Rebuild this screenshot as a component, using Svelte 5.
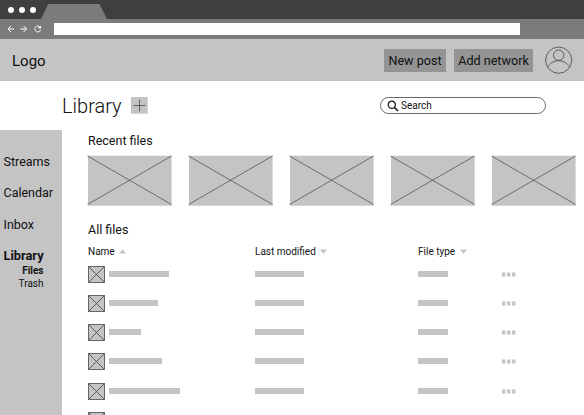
<script>
  const thumbs = [1, 2, 3, 4, 5];
  const rows = [60, 49, 32, 53, 71, 0];
</script>

<div class="window">
  <div class="tabs">
    <i></i><i></i><i></i>
    <svg class="tab" width="66" height="15"><path d="M0 15 7.2 0H58.500L66 15Z" fill="#7b7b7b" /></svg>
  </div>
  <div class="toolbar">
    <svg width="44" height="10" fill="none" stroke="#fff" stroke-width="1">
      <path d="M7 5H1.200M4 2 1 5l3 3M13.500 5h6M16.600 2l3 3-3 3" />
      <path d="M33 3.200A2.900 2.900 0 1 0 33.500 6" />
      <path d="M34 1.500V4.500H31Z" fill="#fff" stroke="none" />
    </svg>
    <div class="address"></div>
  </div>
  <header>
    <span class="logo">Logo</span>
    <button class="new">New post</button>
    <button class="network">Add network</button>
    <svg class="avatar" width="28" height="28" fill="none" stroke="#444" stroke-width=".8">
      <circle cx="13.700" cy="14.200" r="13.100" /><circle cx="13.700" cy="9.200" r="5.200" />
      <path d="M2.600 21.200C7.700 12.500 19.700 12.500 24.800 21.200" />
    </svg>
  </header>
  <div class="title">
    <h1>Library</h1>
    <svg class="plus" width="17" height="17"><rect width="16.700" height="16.700" fill="#c4c4c4" /><path d="M2.500 8.500H14.500M8.500 2.500V14.500" stroke="#555" stroke-width=".9" /></svg>
    <div class="search">
      <svg width="12" height="12" fill="none" stroke="#111"><circle cx="4.800" cy="4.800" r="3.600" stroke-width="1.200" /><path d="M7.500 7.500 11 11" stroke-width="1.600" /></svg>
      <span>Search</span>
    </div>
  </div>
  <div class="body">
    <nav>
      <span>Streams</span>
      <span>Calendar</span>
      <span>Inbox</span>
      <b class="current">Library</b>
      <div class="sub"><b>Files</b><span>Trash</span></div>
    </nav>
    <main>
      <h2>Recent files</h2>
      <div class="thumbs">
        {#each thumbs as t (t)}
          <svg width="85" height="51"><rect x="1" y=".7" width="83.600" height="50" fill="#c4c4c4" /><path d="M.5 1 84.600 49.500M.5 49.500 84.600 1" stroke="#555" stroke-width=".8" /></svg>
        {/each}
      </div>
      <h2 class="all">All files</h2>
      <div class="row head">
        <div class="name">Name <svg width="7" height="5"><path d="M0 4.500 3.500 0 7 4.500Z" fill="#c4c4c4" /></svg></div>
        <div class="modified">Last modified <svg width="7" height="5"><path d="M0 .5H7L3.500 5Z" fill="#c4c4c4" /></svg></div>
        <div class="type">File type <svg width="7" height="5"><path d="M0 .5H7L3.500 5Z" fill="#c4c4c4" /></svg></div>
      </div>
      {#each rows as w, n (n)}
        <div class="row">
          <div class="name">
            <svg class="file" width="17" height="17"><path d="M.5.5h16v16H.5ZM.5.5l16 16M.5 16.500l16-16" fill="#c4c4c4" stroke="#444" stroke-width=".8" /></svg>
            <span class="bar" style:width="{w}px"></span>
          </div>
          <div class="modified"><span class="bar"></span></div>
          <div class="type"><span class="bar"></span></div>
          <svg class="more" width="14" height="17" fill="#c4c4c4"><path d="M0 6.500h3.500v4H0ZM5 6.500h3.500v4H5ZM10 6.500h3.500v4H10Z" /></svg>
        </div>
      {/each}
    </main>
  </div>
</div>

<style>
  .window { width: 584px; height: 415px; overflow: hidden; display: flex; flex-direction: column; background: #fff; color: #111; font-family: Roboto, sans-serif; }
  .window :global(*) { box-sizing: border-box; }
  svg { display: block; flex: none; }
  .tabs { height: 19px; flex: none; background: #3f3f3f; display: flex; align-items: center; padding-left: 8px; gap: 5px; }
  .tabs i { width: 6px; height: 6px; border-radius: 50%; background: #fff; }
  .tab { align-self: flex-end; }
  .toolbar { height: 20px; flex: none; background: #7b7b7b; display: flex; align-items: center; padding-left: 7px; }
  .address { width: 465.500px; height: 12px; background: #fff; margin-left: 3px; }
  header { height: 42px; flex: none; background: #c4c4c4; display: flex; align-items: center; padding-left: 12px; }
  .logo { width: 372px; font-size: 15px; padding-top: 1px; }
  button { height: 23px; border: 0; padding: 0; background: #949494; font: 12.600px Roboto, sans-serif; color: #111; white-space: nowrap; }
  .new { width: 62px; }
  .network { width: 79px; margin-left: 8px; }
  .avatar { margin-left: 12px; }
  .title { height: 49px; flex: none; display: flex; align-items: center; padding-left: 62px; }
  h1 { width: 69px; margin: 0; font-size: 20px; line-height: 24px; font-weight: 300; }
  .search { width: 166px; height: 17px; margin-left: 232px; border: 1px solid #666; border-radius: 9px; display: flex; align-items: center; padding-left: 6px; gap: 2px; font-size: 10px; }
  .body { display: flex; height: 285px; }
  nav { width: 61.500px; flex: none; background: #c4c4c4; padding: 24px 0 0 3.500px; display: flex; flex-direction: column; font-size: 12.500px; line-height: 16px; gap: 15.400px; }
  nav b { font-weight: 700; }
  .current { font-size: 12.800px; }
  .sub { width: 40px; display: flex; flex-direction: column; align-items: flex-end; margin-top: -16px; font-size: 10px; line-height: 13.300px; }
  main { padding: 3px 0 0 26.500px; flex: none; width: 522px; }
  h2 { margin: 0; font-size: 12.500px; font-weight: 400; line-height: 16px; }
  .thumbs { display: flex; gap: 16.100px; margin: 6px 0 0 -1px; }
  .all { margin-top: 16px; }
  .row { display: flex; height: 29.200px; align-items: flex-start; }
  .row.head { height: 27.800px; padding-top: 7px; font-size: 10px; line-height: 13px; }
  .row > div { display: flex; height: 17px; align-items: center; flex: none; }
  .row.head > div { height: 13px; gap: 4.500px; }
  .name { width: 167px; gap: 4px; }
  .modified { width: 163px; }
  .type { width: 83.700px; }
  .bar { height: 6px; background: #c4c4c4; margin-bottom: 1px; }
  .modified .bar { width: 49px; }
  .type .bar { width: 30px; }
</style>
